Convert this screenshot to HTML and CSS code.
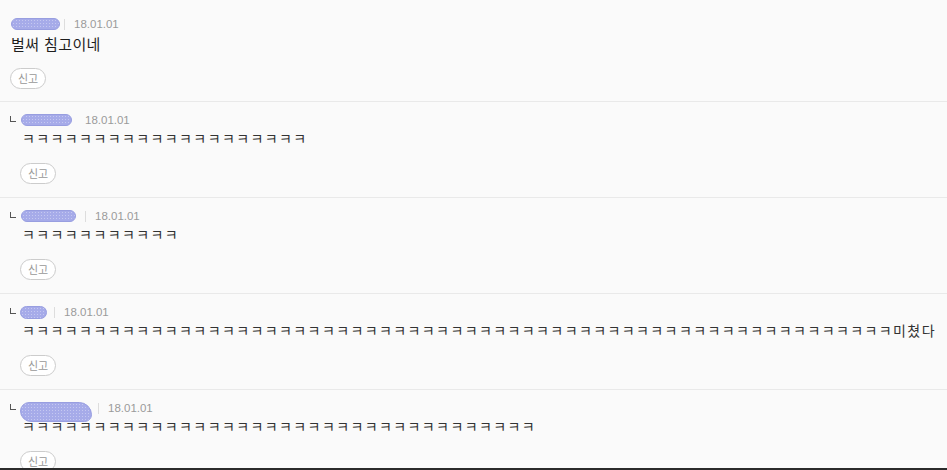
FILE: index.html
```html
<!DOCTYPE html>
<html lang="ko">
<head>
  <meta charset="UTF-8" />
  <meta name="viewport" content="width=device-width, initial-scale=1" />
  <title>댓글</title>
  <link rel="stylesheet" href="styles.css">
</head>
<body>
  <div class="comment-list">

    <div class="comment">
      <div class="meta">
        <span class="nick nick-c1"></span>
        <span class="sep"></span>
        <span class="date">18.01.01</span>
      </div>
      <p class="text text-main">벌써 침고이네</p>
      <button type="button" class="report">신고</button>
    </div>

    <div class="comment reply">
      <div class="meta">
        <span class="reply-mark"></span>
        <span class="nick nick-r1"></span>
        <span class="sep sep-hidden"></span>
        <span class="date">18.01.01</span>
      </div>
      <p class="text">ㅋㅋㅋㅋㅋㅋㅋㅋㅋㅋㅋㅋㅋㅋㅋㅋㅋㅋㅋㅋ</p>
      <button type="button" class="report">신고</button>
    </div>

    <div class="comment reply">
      <div class="meta">
        <span class="reply-mark"></span>
        <span class="nick nick-r2"></span>
        <span class="sep"></span>
        <span class="date">18.01.01</span>
      </div>
      <p class="text">ㅋㅋㅋㅋㅋㅋㅋㅋㅋㅋㅋ</p>
      <button type="button" class="report">신고</button>
    </div>

    <div class="comment reply">
      <div class="meta">
        <span class="reply-mark"></span>
        <span class="nick nick-r3"></span>
        <span class="sep"></span>
        <span class="date">18.01.01</span>
      </div>
      <p class="text">ㅋㅋㅋㅋㅋㅋㅋㅋㅋㅋㅋㅋㅋㅋㅋㅋㅋㅋㅋㅋㅋㅋㅋㅋㅋㅋㅋㅋㅋㅋㅋㅋㅋㅋㅋㅋㅋㅋㅋㅋㅋㅋㅋㅋㅋㅋㅋㅋㅋㅋㅋㅋㅋㅋㅋㅋㅋㅋㅋㅋㅋ미쳤다</p>
      <button type="button" class="report">신고</button>
    </div>

    <div class="comment reply">
      <div class="meta">
        <span class="reply-mark"></span>
        <span class="nick nick-r4"></span>
        <span class="sep"></span>
        <span class="date">18.01.01</span>
      </div>
      <p class="text">ㅋㅋㅋㅋㅋㅋㅋㅋㅋㅋㅋㅋㅋㅋㅋㅋㅋㅋㅋㅋㅋㅋㅋㅋㅋㅋㅋㅋㅋㅋㅋㅋㅋㅋㅋㅋ</p>
      <button type="button" class="report">신고</button>
    </div>

  </div>
</body>
</html>
```

FILE: styles.css
```css
body {
  margin: 0;
  background: #fafafa;
  font-family: "Noto Sans CJK KR", "Liberation Sans", sans-serif;
  color: #222;
}
.comment-list {
  height: 468px;
  overflow: hidden;
  border-bottom: 2px solid #2b2b2b;
}
.comment {
  padding: 16px 10px 12px;
  border-bottom: 1px solid #e9e9e9;
}
.reply {
  padding-top: 10px;
  padding-bottom: 13px;
}
.meta {
  display: flex;
  align-items: center;
  height: 16px;
}
.reply-mark {
  width: 5px;
  height: 5px;
  border-left: 1px solid #555;
  border-bottom: 1px solid #555;
  margin-right: 4px;
  margin-top: -2px;
}
/* nicknames are blurred out */
.nick {
  height: 12px;
  background: #a6abe9;
  border: 1px solid #989ee0;
  border-radius: 7px;
  box-sizing: border-box;
  filter: blur(0.5px);
  background-image: radial-gradient(circle, rgba(255,255,255,0.35) 0.6px, transparent 0.8px);
  background-size: 3px 3px;
}
.nick-c1 { width: 49px; margin-left: 1px; margin-right: 4px; }
.nick-r1 { width: 51px; margin-left: 1px; margin-right: 3px; }
.nick-r2 { width: 55px; margin-left: 1px; margin-right: 9px; }
.nick-r3 { width: 27px; height: 13px; margin-right: 7px; }
.nick-r4 {
  width: 72px;
  height: 20px;
  margin-top: 8px;
  margin-right: 6px;
  border-radius: 10px 14px 8px 12px;
}
.sep {
  width: 1px;
  height: 11px;
  background: #ddd;
  margin-right: 9px;
}
.sep-hidden {
  background: transparent;
}
.date {
  font-family: "Liberation Sans", sans-serif;
  font-size: 11.5px;
  color: #9a9a9a;
}
.text {
  margin: 1px 0 0 12px;
  font-size: 14px;
  line-height: 18px;
  letter-spacing: 1.4px;
  color: #333;
  white-space: nowrap;
}
.text-main {
  margin: 2px 0 0 1px;
  font-size: 15px;
  line-height: 20px;
  letter-spacing: 0.4px;
  color: #1e1e1e;
}
.report {
  display: block;
  margin-top: 14px;
  height: 21px;
  padding: 0 7px;
  background: #fff;
  border: 1px solid #ccc;
  border-radius: 11px;
  font-family: "Noto Sans CJK KR", sans-serif;
  font-size: 11px;
  color: #999;
  line-height: 19px;
}
.reply .report {
  margin-top: 16px;
  margin-left: 10px;
}
```
